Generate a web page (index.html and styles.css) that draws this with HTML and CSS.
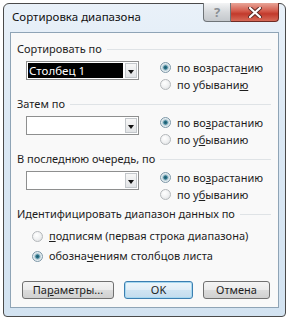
FILE: index.html
```html
<!DOCTYPE html>
<html lang="ru">
  <head>
    <meta charset="UTF-8" />
    <title>Сортировка диапазона</title>
    <link rel="stylesheet" href="styles.css">
  </head>

  <body>
    <div class="window">
      <div class="titlebar">
        <span class="title">Сортировка диапазона</span>
        <div class="caption-buttons">
          <span class="btn-help">?</span>
          <span class="btn-close">
            <svg width="14" height="11" viewBox="0 0 14 11">
              <path d="M2 1 L12 10 M12 1 L2 10" stroke="#5a2a26" stroke-width="4" stroke-linecap="round" />
              <path d="M2 1 L12 10 M12 1 L2 10" stroke="#ffffff" stroke-width="2.2" stroke-linecap="round" />
            </svg>
          </span>
        </div>
      </div>

      <main class="client">
        <section class="sort-group">
          <div class="group-head"><span>Сортировать по</span></div>
          <div class="sort-row">
            <div class="combo">
              <span class="combo-value selected">Столбец 1</span>
              <span class="combo-arrow"></span>
            </div>
            <div class="radios">
              <label class="radio"><span class="dot checked"></span><span>по возраста<u>н</u>ию</span></label>
              <label class="radio"><span class="dot"></span><span>по убывани<u>ю</u></span></label>
            </div>
          </div>
        </section>

        <section class="sort-group">
          <div class="group-head"><span>Затем по</span></div>
          <div class="sort-row">
            <div class="combo">
              <span class="combo-value"></span>
              <span class="combo-arrow"></span>
            </div>
            <div class="radios">
              <label class="radio"><span class="dot checked"></span><span>по во<u>з</u>растанию</span></label>
              <label class="radio"><span class="dot"></span><span>по у<u>б</u>ыванию</span></label>
            </div>
          </div>
        </section>

        <section class="sort-group">
          <div class="group-head"><span>В последнюю очередь, по</span></div>
          <div class="sort-row">
            <div class="combo">
              <span class="combo-value"></span>
              <span class="combo-arrow"></span>
            </div>
            <div class="radios">
              <label class="radio"><span class="dot checked"></span><span>по во<u>з</u>растанию</span></label>
              <label class="radio"><span class="dot"></span><span>по у<u>б</u>ыванию</span></label>
            </div>
          </div>
        </section>

        <section class="ident-group">
          <div class="group-head"><span>Идентифицировать диапазон данных по</span></div>
          <div class="ident-list">
            <label class="radio"><span class="dot"></span><span><u>п</u>одписям (первая строка диапазона)</span></label>
            <label class="radio"><span class="dot checked"></span><span>обозна<u>ч</u>ениям столбцов листа</span></label>
          </div>
        </section>

        <div class="buttons">
          <button class="btn btn-params">Па<u>р</u>аметры...</button>
          <button class="btn btn-ok">OK</button>
          <button class="btn btn-cancel">Отмена</button>
        </div>
      </main>
    </div>
  </body>
</html>
```

FILE: styles.css
```css
* {
  padding: 0;
  margin: 0;
  box-sizing: border-box;
}

body {
  background-color: #ffffff;
  font-family: "Noto Sans", "DejaVu Sans", sans-serif;
  font-size: 11px;
  color: #1e1e1e;
}

.window {
  margin: 3px;
  width: 283px;
  height: 314px;
  border: 1px solid #4a4a4a;
  border-radius: 6px 6px 4px 4px;
  background: linear-gradient(180deg, #e9f1f9 0%, #dbe8f4 40%, #d3e3f1 100%);
  display: flex;
  flex-direction: column;
}

.titlebar {
  height: 28px;
  display: flex;
  justify-content: space-between;
  align-items: flex-start;
}

.title {
  padding: 5px 0 0 8px;
  line-height: 16px;
  font-size: 11.5px;
  color: #111111;
}

.caption-buttons {
  display: flex;
  margin: -1px 6px 0 0;
}

.btn-help {
  width: 28px;
  height: 19px;
  border: 1px solid #6f7478;
  border-top: none;
  border-radius: 0 0 0 4px;
  background: linear-gradient(180deg, #f3f4f5 0%, #d6d9dc 50%, #c4c8cc 100%);
  color: #8a8f94;
  font-size: 13px;
  font-weight: bold;
  line-height: 18px;
  text-align: center;
}

.btn-close {
  width: 48px;
  height: 19px;
  border: 1px solid #6e2b24;
  border-left: none;
  border-top: none;
  border-radius: 0 0 4px 0;
  background: linear-gradient(180deg, #e8a598 0%, #d35a4b 45%, #c23a2c 60%, #d66a58 100%);
  display: flex;
  justify-content: center;
  align-items: center;
}

.client {
  flex: 1;
  margin: 0 6px 8px 6px;
  border: 1px solid #8fa4b6;
  background-color: #f9f9f9;
  padding: 8px 7px 0 6px;
}

.group-head {
  display: flex;
  align-items: center;
  gap: 5px;
  height: 16px;
  line-height: 16px;
  white-space: nowrap;
}

.group-head::after {
  content: "";
  flex: 1;
  height: 1px;
  background-color: #dfe3e6;
}

.sort-group {
  margin-bottom: 3px;
}

.sort-row {
  display: flex;
  margin-top: 2px;
}

.combo {
  margin: 2px 0 0 9px;
  width: 113px;
  height: 19px;
  border: 1px solid #8e8f8f;
  background-color: #ffffff;
  display: flex;
  padding: 1px;
}

.combo-value {
  flex: 1;
  line-height: 15px;
  padding-left: 1px;
  font-size: 11.5px;
}

.combo-value.selected {
  background-color: #000000;
  color: #ffffff;
}

.combo-arrow {
  width: 12px;
  margin-left: 2px;
  border: 1px solid #c3c7cb;
  background: linear-gradient(180deg, #f7f7f7 0%, #e2e4e6 100%);
  position: relative;
}

.combo-arrow::after {
  content: "";
  position: absolute;
  left: 2px;
  top: 6px;
  border-left: 3.5px solid transparent;
  border-right: 3.5px solid transparent;
  border-top: 4px solid #111111;
}

.radios {
  margin-left: 21px;
  display: flex;
  flex-direction: column;
}

.radio {
  display: flex;
  align-items: center;
  gap: 6px;
  line-height: 17px;
  white-space: nowrap;
}

.dot {
  width: 11px;
  height: 11px;
  border-radius: 50%;
  border: 1px solid #b4b8bb;
  background: radial-gradient(circle at 40% 35%, #ffffff 0%, #f0f1f2 50%, #d9dcde 100%);
  flex-shrink: 0;
}

.dot.checked {
  border-color: #7e98a8;
  background: radial-gradient(circle, #1d5568 0%, #2f7c92 28%, #8fb2c0 36%, #e9f0f3 60%, #cfdbe1 100%);
}

.ident-group .group-head {
  margin-top: 1px;
}

.ident-list {
  margin-top: 4px;
  padding-left: 15px;
}

.ident-list .radio {
  line-height: 20px;
}

.buttons {
  display: flex;
  gap: 10px;
  margin: 15px 0 0 5px;
}

.btn {
  height: 18px;
  border: 1px solid #707070;
  border-radius: 3px;
  background: linear-gradient(180deg, #f4f4f4 0%, #ebebeb 48%, #dcdcdc 52%, #d0d0d0 100%);
  font-family: inherit;
  font-size: 11px;
  line-height: 14px;
  color: #1e1e1e;
}

.btn-params {
  width: 92px;
}

.btn-ok {
  width: 69px;
  border-color: #3c7fb1;
  box-shadow: inset 0 0 0 1px #a7d8f0;
  background: linear-gradient(180deg, #eef6fb 0%, #e1eef7 48%, #cfe4f2 52%, #c3dcee 100%);
}

.btn-cancel {
  width: 67px;
}
```
